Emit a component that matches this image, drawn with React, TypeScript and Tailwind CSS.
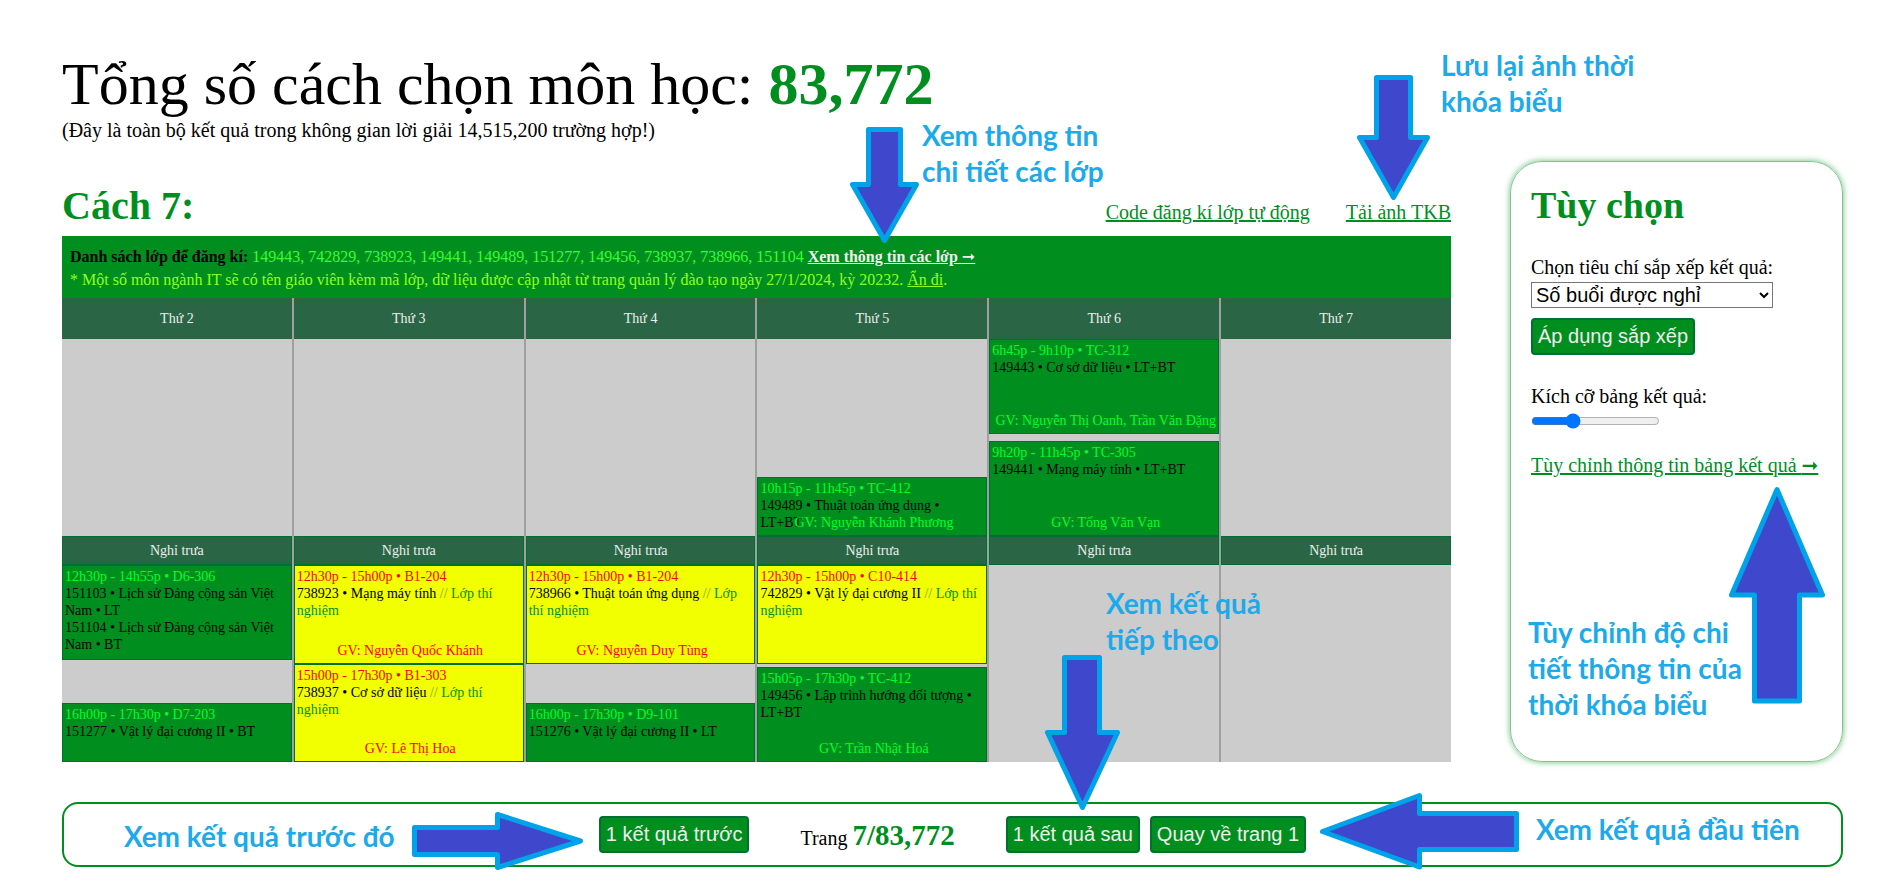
import React from 'react';

type Lesson = {
  from: number;
  to: number;
  time: string;
  lines: string[];
  lab?: boolean;
  teacher?: string;
};

const DAY_START = 405;
const LUNCH_START = 705;
const LUNCH_END = 750;
const DAY_END = 1050;

const days: { name: string; morning: Lesson[]; afternoon: Lesson[] }[] = [
  {
    name: 'Thứ 2',
    morning: [],
    afternoon: [
      {
        from: 750,
        to: 895,
        time: '12h30p - 14h55p • D6-306',
        lines: ['151103 • Lịch sử Đảng cộng sản Việt Nam • LT', '151104 • Lịch sử Đảng cộng sản Việt Nam • BT'],
      },
      { from: 960, to: 1050, time: '16h00p - 17h30p • D7-203', lines: ['151277 • Vật lý đại cương II • BT'] },
    ],
  },
  {
    name: 'Thứ 3',
    morning: [],
    afternoon: [
      { from: 750, to: 900, time: '12h30p - 15h00p • B1-204', lines: ['738923 • Mạng máy tính'], lab: true, teacher: 'Nguyễn Quốc Khánh' },
      { from: 900, to: 1050, time: '15h00p - 17h30p • B1-303', lines: ['738937 • Cơ sở dữ liệu'], lab: true, teacher: 'Lê Thị Hoa' },
    ],
  },
  {
    name: 'Thứ 4',
    morning: [],
    afternoon: [
      { from: 750, to: 900, time: '12h30p - 15h00p • B1-204', lines: ['738966 • Thuật toán ứng dụng'], lab: true, teacher: 'Nguyễn Duy Tùng' },
      { from: 960, to: 1050, time: '16h00p - 17h30p • D9-101', lines: ['151276 • Vật lý đại cương II • LT'] },
    ],
  },
  {
    name: 'Thứ 5',
    morning: [
      { from: 615, to: 705, time: '10h15p - 11h45p • TC-412', lines: ['149489 • Thuật toán ứng dụng • LT+BT'], teacher: 'Nguyễn Khánh Phương' },
    ],
    afternoon: [
      { from: 750, to: 900, time: '12h30p - 15h00p • C10-414', lines: ['742829 • Vật lý đại cương II'], lab: true },
      { from: 905, to: 1050, time: '15h05p - 17h30p • TC-412', lines: ['149456 • Lập trình hướng đối tượng • LT+BT'], teacher: 'Trần Nhật Hoá' },
    ],
  },
  {
    name: 'Thứ 6',
    morning: [
      { from: 405, to: 550, time: '6h45p - 9h10p • TC-312', lines: ['149443 • Cơ sở dữ liệu • LT+BT'], teacher: 'Nguyễn Thị Oanh, Trần Văn Đặng' },
      { from: 560, to: 705, time: '9h20p - 11h45p • TC-305', lines: ['149441 • Mạng máy tính • LT+BT'], teacher: 'Tống Văn Vạn' },
    ],
    afternoon: [],
  },
  { name: 'Thứ 7', morning: [], afternoon: [] },
];

const share = (minutes: number) => ({ height: `${(minutes / (DAY_END - DAY_START)) * 100}%` });

function Gap({ minutes }: { minutes: number }) {
  return minutes > 0 ? <div style={share(minutes)} /> : null;
}

function LessonCard({ lesson }: { lesson: Lesson }) {
  const accent = lesson.lab ? 'text-[#ff0000]' : 'text-[#00ff2a]';
  return (
    <div
      className={`relative border border-[#007030] pt-[2px] pr-1 pl-[2px] ${lesson.lab ? 'bg-[#f2ff00]' : 'bg-[#008f1f]'}`}
      style={share(lesson.to - lesson.from)}
    >
      <p className={accent}>{lesson.time}</p>
      {lesson.lines.map((line) => (
        <p key={line}>
          {line}
          {lesson.lab && (
            <>
              <span className="text-[#7fa51c]"> //</span>
              <span className="text-[#008f1f]"> Lớp thí nghiệm</span>
            </>
          )}
        </p>
      ))}
      {lesson.teacher && (
        <p className={`absolute right-0 bottom-1 left-[3px] text-center whitespace-nowrap ${accent}`}>GV: {lesson.teacher}</p>
      )}
    </div>
  );
}

function Session({ lessons, from, to }: { lessons: Lesson[]; from: number; to: number }) {
  let cursor = from;
  return (
    <>
      {lessons.map((lesson) => {
        const gap = lesson.from - cursor;
        cursor = lesson.to;
        return (
          <React.Fragment key={lesson.from}>
            <Gap minutes={gap} />
            <LessonCard lesson={lesson} />
          </React.Fragment>
        );
      })}
      <Gap minutes={to - cursor} />
    </>
  );
}

function ArrowGlyph() {
  return <span className='font-["DejaVu_Sans",sans-serif] leading-none font-normal'>➞</span>;
}

const pushButton =
  'h-[37px] rounded border-2 border-[#007030] bg-[#008f1f] px-[5px] font-["Liberation_Sans",sans-serif] text-[20px] leading-[23px] whitespace-nowrap text-[#eeeeee]';

const linkStyle = 'text-[#008f1f] underline decoration-2';

const arrows = [
  '868.5,129.5 900.5,129.5 900.5,184.5 916.5,184.5 884.5,240.5 852.5,184.5 868.5,184.5',
  '1376.5,77.5 1410.5,77.5 1410.5,137.5 1427.5,137.5 1393.5,197.5 1359.5,137.5 1376.5,137.5',
  '1754.5,701 1754.5,595 1731.5,595 1777,489.5 1822.5,595 1799.5,595 1799.5,701',
  '1064.5,657.5 1099.5,657.5 1099.5,732.5 1117.5,732.5 1082.5,807.5 1047.5,732.5 1064.5,732.5',
  '1322.5,831.5 1419.5,795.5 1419.5,813.5 1516.5,813.5 1516.5,849.5 1419.5,849.5 1419.5,867',
  '414.5,827.5 497.5,827.5 497.5,814.5 580.5,841 497.5,867.5 497.5,854.5 414.5,854.5',
];

const note = 'absolute font-["Lato",sans-serif] text-[28px] leading-9 font-bold whitespace-nowrap text-[#1caaea]';

function Guide() {
  return (
    <div className="pointer-events-none absolute inset-0">
      <svg width="1896" height="893" viewBox="0 0 1896 893" className="absolute top-0 left-0 max-w-none" aria-hidden="true">
        {arrows.map((points) => (
          <polygon key={points} points={points} fill="#3f48cc" stroke="#00a2e8" strokeWidth="5" strokeLinejoin="round" />
        ))}
      </svg>
      <p className={`${note} top-[117px] left-[922px]`}>Xem thông tin<br />chi tiết các lớp</p>
      <p className={`${note} top-[47px] left-[1441px]`}>Lưu lại ảnh thời<br />khóa biểu</p>
      <p className={`${note} top-[585px] left-[1106px]`}>Xem kết quả<br />tiếp theo</p>
      <p className={`${note} top-[614px] left-[1528px]`}>Tùy chỉnh độ chi<br />tiết thông tin của<br />thời khóa biểu</p>
      <p className={`${note} top-[811px] left-[1536px]`}>Xem kết quả đầu tiên</p>
      <p className={`${note} top-[818px] left-[124px]`}>Xem kết quả trước đó</p>
    </div>
  );
}

export default function App() {
  return (
    <div className='relative min-h-screen bg-white pt-[50px] pr-[53px] pb-6 pl-[62px] font-["Liberation_Serif",serif] text-[20px] leading-[23px] text-black'>
      <header>
        <h1 className="text-[60px] leading-[69px]">
          Tổng số cách chọn môn học: <b className="text-[#008f1f]">83,772</b>
        </h1>
        <p>(Đây là toàn bộ kết quả trong không gian lời giải 14,515,200 trường hợp!)</p>
      </header>

      <div className="mt-[19px] flex gap-[59px]">
        <main className="min-w-0 flex-1">
          <div className="flex h-[75px] items-baseline pt-[22px]">
            <h2 className="flex-1 text-[40px] leading-[46px] font-bold text-[#008f1f]">Cách 7:</h2>
            <nav className="flex gap-9">
              <a href="#code" className={linkStyle}>Code đăng kí lớp tự động</a>
              <a href="#image" className={linkStyle}>Tải ảnh TKB</a>
            </nav>
          </div>

          <section className="h-[62px] bg-[#008f1f] px-2 py-[9px] text-[16px] leading-[23px]">
            <p className="text-[#33ff33]">
              <b className="text-black">Danh sách lớp để đăng kí:</b> 149443, 742829, 738923, 149441, 149489, 151277, 149456, 738937, 738966, 151104{' '}
              <a href="#classes" className="font-bold text-[#eeeeee] underline">
                Xem thông tin các lớp <ArrowGlyph />
              </a>
            </p>
            <p className="text-[#90ff20]">
              * Một số môn ngành IT sẽ có tên giáo viên kèm mã lớp, dữ liệu được cập nhật từ trang quản lý đào tạo ngày 27/1/2024, kỳ 20232.{' '}
              <a href="#hide" className="underline">Ẩn đi</a>.
            </p>
          </section>

          <section className="grid grid-cols-6 gap-x-[2px] bg-[#a0a0a0] text-[14px] leading-[17px]">
            {days.map((day) => (
              <div key={day.name} className="min-w-0 bg-[#cccccc]">
                <h3 className="flex h-[41px] items-center justify-center bg-[#2a6645] text-[#eeeeee]">{day.name}</h3>
                <div className="h-[423px]">
                  <Session lessons={day.morning} from={DAY_START} to={LUNCH_START} />
                  <div
                    className="flex items-center justify-center border border-[#007030] bg-[#2a6645] text-[#eeeeee]"
                    style={share(LUNCH_END - LUNCH_START)}
                  >
                    Nghỉ trưa
                  </div>
                  <Session lessons={day.afternoon} from={LUNCH_END} to={DAY_END} />
                </div>
              </div>
            ))}
          </section>
        </main>

        <aside className="flex w-[333px] flex-col items-start rounded-[32px] border border-[#80c78f] px-5 pt-5 shadow-[0_0_6px_#008f1f99]">
          <h2 className="text-[38px] leading-[46px] font-bold text-[#008f1f]">Tùy chọn</h2>
          <label htmlFor="sort" className="mt-7">Chọn tiêu chí sắp xếp kết quả:</label>
          <select
            id="sort"
            className='mt-[3px] h-[26px] w-[242px] border border-[#767676] bg-white font-["Liberation_Sans",sans-serif] text-[20px] leading-6'
          >
            <option>Số buổi được nghỉ</option>
          </select>
          <button type="button" className={`mt-[10px] ${pushButton}`}>Áp dụng sắp xếp</button>
          <label htmlFor="size" className="mt-[30px]">Kích cỡ bảng kết quả:</label>
          <input id="size" type="range" min="0" max="100" defaultValue="30" className="mt-[5px] w-[129px]" />
          <a href="#customise" className={`mt-[25px] whitespace-nowrap ${linkStyle}`}>
            Tùy chỉnh thông tin bảng kết quả <ArrowGlyph />
          </a>
        </aside>
      </div>

      <footer className="mt-10 flex h-[65px] items-center justify-center rounded-2xl border-2 border-[#008f1f]">
        <button type="button" className={pushButton}>1 kết quả trước</button>
        <p className="mx-[51px] whitespace-nowrap">
          Trang <b className="text-[29px] leading-[34px] text-[#008f1f]">7/83,772</b>
        </p>
        <button type="button" className={pushButton}>1 kết quả sau</button>
        <button type="button" className={`ml-[10px] ${pushButton}`}>Quay về trang 1</button>
      </footer>

      <Guide />
    </div>
  );
}
